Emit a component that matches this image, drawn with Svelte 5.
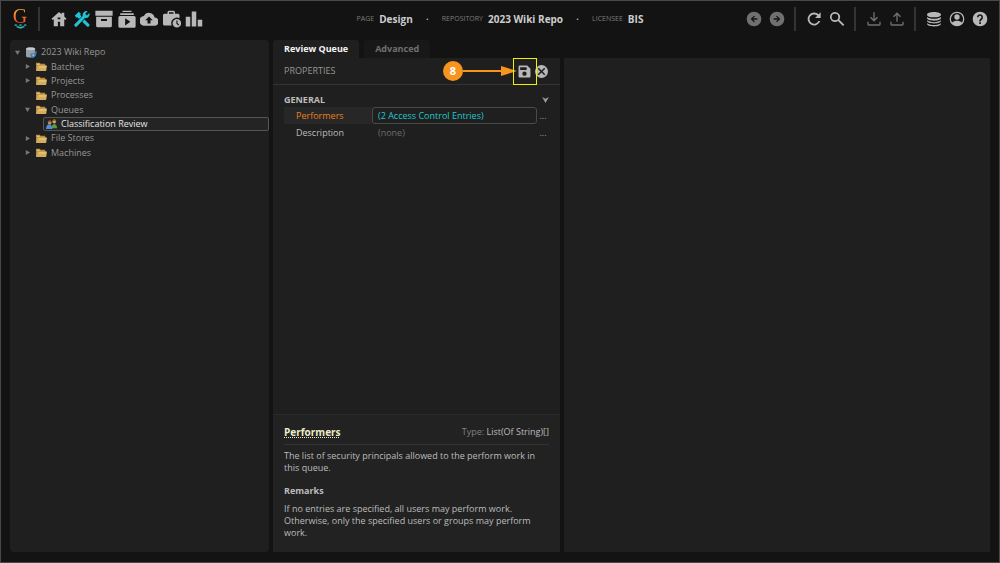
<script>
    const tools = [
        { name: 'home', label: 'Home' },
        { name: 'design', label: 'Design' },
        { name: 'batches', label: 'Batches' },
        { name: 'tasks', label: 'Tasks' },
        { name: 'imports', label: 'Imports' },
        { name: 'jobs', label: 'Jobs' },
        { name: 'stats', label: 'Stats' }
    ];

    const actions = [
        [{ name: 'back', label: 'Back', dim: true }, { name: 'forward', label: 'Forward', dim: true }],
        [{ name: 'refresh', label: 'Refresh' }, { name: 'search', label: 'Search' }],
        [{ name: 'download', label: 'Download', dim: true }, { name: 'upload', label: 'Upload', dim: true }],
        [{ name: 'database', label: 'Repositories' }, { name: 'user', label: 'Account' }, { name: 'help', label: 'Help' }]
    ];

    const crumbs = [
        { key: 'PAGE', value: 'Design' },
        { key: 'REPOSITORY', value: '2023 Wiki Repo' },
        { key: 'LICENSEE', value: 'BIS' }
    ];

    const nodes = [
        { label: '2023 Wiki Repo', level: 0, arrow: 'down', icon: 'repo' },
        { label: 'Batches', level: 1, arrow: 'right', icon: 'folder' },
        { label: 'Projects', level: 1, arrow: 'right', icon: 'folder' },
        { label: 'Processes', level: 1, arrow: '', icon: 'folder' },
        { label: 'Queues', level: 1, arrow: 'down', icon: 'folder' },
        { label: 'Classification Review', level: 2, arrow: '', icon: 'people' },
        { label: 'File Stores', level: 1, arrow: 'right', icon: 'folder' },
        { label: 'Machines', level: 1, arrow: 'right', icon: 'folder' }
    ];

    let page = 'design';
    let tab = 'Review Queue';
    let selected = 'Classification Review';

    // 24x24 icon shapes, filled with even-odd
    const paths = {
        home: 'M12 2.500 2 11.500l1.600 1.900L5 12.200V21.500h5.500v-6h3v6H19v-9.300l1.400 1.200 1.600-1.900-3-2.700V3.500h-3.500v2.200zM10.200 10h3.600v2.200h-3.600z',
        design: 'M21.300 18.700 15.300 12.700 12.400 15.600 18.400 21.600a2 2 0 0 0 2.900-2.900zM17 10.800a5 5 0 0 0 4.700-6.800l-3.200 3.200-2.200-2.200 3.200-3.200a5 5 0 0 0-6.500 6.100l-10.600 10.700a2.100 2.100 0 0 0 3 3L15.900 10.700zM9.700 10.300l1.800-1.800-1.900-1.900.8-1.500L7.800 2.300 2.300 7.500l3 3 .9-.9 1.800 2.500z',
        batches: 'M.5 1h23v6.500H.5zM1.500 9h21v12a2 2 0 0 1-2 2h-17a2 2 0 0 1-2-2zM8 12v2.500h8V12z',
        tasks: 'M6 1h12v1.800H6zM3 4.300h18v2.200H3zM2.500 8h19a2 2 0 0 1 2 2v11.500a2 2 0 0 1-2 2h-19a2 2 0 0 1-2-2V10a2 2 0 0 1 2-2zM9.500 11v9.500l7-4.700z',
        imports: 'M19.400 10A7.500 7.500 0 0 0 5.300 8 6.500 6.500 0 0 0 6 21h13.500a5.500 5.500 0 0 0-.1-11zM14 13.500V18h-4v-4.500H7l5-5 5 5z',
        jobs: 'M8 1h6a2 2 0 0 1 2 2v2h4a2 2 0 0 1 2 2v4a7.500 7.500 0 0 0-10.400 9.500H2a2 2 0 0 1-2-2V7a2 2 0 0 1 2-2h4V3a2 2 0 0 1 2-2zM8 3v2h6V3zM18.500 12a5.700 5.700 0 1 0 0 11.400 5.700 5.700 0 0 0 0-11.400zM17.800 14h1.500v3.300l2.200 2.200-1.100 1-2.600-2.600z',
        stats: 'M1 9h6v13H1zM9 2h6v20H9zM17 13h6v9h-6z',
        back: 'M12 1a11 11 0 1 0 0 22 11 11 0 0 0 0-22zM12 7l1.400 1.400-2.600 2.500H17v2.200h-6.200l2.600 2.500L12 17l-5-5z',
        forward: 'M12 1a11 11 0 1 0 0 22 11 11 0 0 0 0-22zM12 7l5 5-5 5-1.400-1.400 2.600-2.500H7v-2.200h6.200l-2.600-2.500z',
        refresh: 'M19 5A9.700 9.700 0 1 0 21.400 15h-2.800A7 7 0 1 1 17 7l-3.500 3.500H22V2z',
        search: 'M9 1.500a7.500 7.500 0 1 0 4.500 13.500L21 22.500l2-2-7.500-7.500A7.500 7.500 0 0 0 9 1.500zM9 4a5 5 0 1 1 0 10A5 5 0 0 1 9 4z',
        download: 'M11 2h2v10l3.500-3.500L18 10l-6 6-6-6 1.500-1.500L11 12zM2 16h2v4h16v-4h2v4a2 2 0 0 1-2 2H4a2 2 0 0 1-2-2z',
        upload: 'M12 2l6 6-1.500 1.500L13 6v10h-2V6L7.500 9.500 6 8zM2 16h2v4h16v-4h2v4a2 2 0 0 1-2 2H4a2 2 0 0 1-2-2z',
        database: 'M12 1.500c6 0 10.500 1.700 10.500 4s-4.500 4-10.500 4-10.500-1.700-10.500-4 4.500-4 10.500-4zM1.500 9c2 1.800 6 2.700 10.500 2.700s8.500-.9 10.500-2.700v1.500c0 2.200-4.500 4-10.500 4s-10.500-1.800-10.500-4zM1.500 14c2 1.800 6 2.700 10.500 2.700s8.500-.9 10.500-2.700v.8c0 2.200-4.500 4-10.500 4s-10.500-1.800-10.500-4zM1.500 18.300c2 1.800 6 2.700 10.500 2.700s8.500-.9 10.500-2.700v1c0 2.200-4.500 4-10.500 4s-10.500-1.800-10.500-4z',
        user: 'M12 1a11 11 0 1 0 0 22 11 11 0 0 0 0-22zM12 3a9 9 0 0 1 7.300 14.200c-1.500-1.900-5.100-2.600-7.300-2.600s-5.800.7-7.300 2.600A9 9 0 0 1 12 3zM12 5a4 4 0 1 0 0 8 4 4 0 0 0 0-8z',
        help: 'M12 1a11 11 0 1 0 0 22 11 11 0 0 0 0-22zM10.800 17h2.500v2.500h-2.500zM7.500 9.500a4.500 4.500 0 1 1 7.700 3.100c-1.300 1.200-1.900 1.600-1.900 3.200h-2.500c0-2.600 1.100-3.400 2.300-4.500A2.200 2.200 0 1 0 9.800 9.500z',
        save: 'M3 1h14l6 6v14a2 2 0 0 1-2 2H3a2 2 0 0 1-2-2V3a2 2 0 0 1 2-2zM4 4v5h12V4zM12 12a4 4 0 1 0 0 8 4 4 0 0 0 0-8z',
        close: 'M12 0a12 12 0 1 0 0 24 12 12 0 0 0 0-24zM7 5l5 5 5-5 2 2-5 5 5 5-2 2-5-5-5 5-2-2 5-5-5-5z'
    };
</script>

{#snippet icon(name)}
    <svg viewBox="0 0 24 24" aria-hidden="true"><path fill-rule="evenodd" d={paths[name]} /></svg>
{/snippet}

<div class="app">
    <header>
        <div class="left">
            <!-- G over a small teal wave -->
            <div class="logo">
                <span>G</span>
                <svg viewBox="0 0 14 5" aria-hidden="true">
                    <path d="M0 1l2-1 2 1-2 1zM5 1l2-1 2 1-2 1zM10 1l2-1 2 1-2 1zM2 3l2-1 3 1 3-1 2 1-3 1-2 1-2-1z" />
                </svg>
            </div>
            <i class="sep"></i>
            <nav>
                {#each tools as t}
                    <button class:active={page === t.name} aria-label={t.label} on:click={() => page = t.name}>{@render icon(t.name)}</button>
                {/each}
            </nav>
        </div>

        <div class="crumbs">
            {#each crumbs as c, i}
                {#if i > 0}<span class="dot">·</span>{/if}
                <span class="key">{c.key}</span>
                <b>{c.value}</b>
            {/each}
        </div>

        <div class="right">
            {#each actions as group, i}
                {#if i > 0}<i class="sep"></i>{/if}
                <div class="group">
                    {#each group as a}
                        <button class:dim={a.dim} aria-label={a.label}>{@render icon(a.name)}</button>
                    {/each}
                </div>
            {/each}
        </div>
    </header>

    <main>
        <aside>
            <ul>
                {#each nodes as n}
                    <li class="level{n.level}">
                        <button class="node" class:selected={selected === n.label} on:click={() => selected = n.label}>
                            {#if n.level < 2}
                                <svg class="arrow" viewBox="0 0 6 6" aria-hidden="true">
                                    {#if n.arrow === 'down'}<path d="M0 1h6L3 6z" />{/if}
                                    {#if n.arrow === 'right'}<path d="M1 0l5 3-5 3z" />{/if}
                                </svg>
                            {/if}
                            <svg class="pic" viewBox="0 0 12 12" aria-hidden="true">
                                {#if n.icon === 'folder'}
                                    <path fill="#b98a3c" d="M0 2h4l1 1h5v2h1v5H0z" />
                                    <path fill="#d3ad5c" d="M2 5h10l-1 6H0z" />
                                    <path fill="#ecd28e" d="M1 3h3v1H1zM3 6h8v1H3z" />
                                {:else if n.icon === 'repo'}
                                    <path fill="#98a0a6" d="M0 2c0-2 10-2 10 0v8c0 2-10 2-10 0z" />
                                    <path fill="#c5cacd" d="M0 2c0-2 10-2 10 0s-10 2-10 0z" />
                                    <path fill="#3d7dba" d="M5 7l3 0 4-3-1 5-3 3-3-2z" />
                                    <path fill="#8fc0e6" d="M7 8h2v2H7z" />
                                {:else}
                                    <circle cx="4" cy="4" r="2" fill="#c98b4f" />
                                    <path fill="#7c4a20" d="M2 4c0-4 4-4 4 0L5 3H3z" />
                                    <circle cx="9" cy="3" r="2" fill="#d9a066" />
                                    <path fill="#9a5c22" d="M7 3c0-4 4-4 4 0l-1-1H8z" />
                                    <path fill="#5b9a3a" d="M6 10c0-6 6-6 6 0z" />
                                    <path fill="#4a8fdb" d="M0 11c0-7 7-7 7 0z" />
                                {/if}
                            </svg>
                            <span>{n.label}</span>
                        </button>
                    </li>
                {/each}
            </ul>
        </aside>

        <section class="editor">
            <div class="tabs">
                {#each ['Review Queue', 'Advanced'] as t}
                    <button class:current={tab === t} on:click={() => tab = t}>{t}</button>
                {/each}
            </div>
            <div class="panel">
                <div class="bar">
                    <span>PROPERTIES</span>
                    <div class="barButtons">
                        <button aria-label="Save">{@render icon('save')}</button>
                        <button aria-label="Close">{@render icon('close')}</button>
                        <div class="callout">
                            <b>8</b>
                            <svg viewBox="0 0 54 12" aria-hidden="true"><path d="M0 5h38V1l16 5-16 5V7H0z" /></svg>
                            <i></i>
                        </div>
                    </div>
                </div>

                <div class="props">
                    <div class="category">
                        <b>GENERAL</b>
                        <svg viewBox="0 0 8 7" aria-hidden="true"><path d="M0 0l4 2 4-2-4 7z" /></svg>
                    </div>
                    <div class="row on">
                        <label for="performers">Performers</label>
                        <input id="performers" value="(2 Access Control Entries)" readonly>
                        <button aria-label="Edit performers">...</button>
                    </div>
                    <div class="row">
                        <label for="description">Description</label>
                        <input id="description" value="(none)">
                        <button aria-label="Edit description">...</button>
                    </div>
                </div>

                <article>
                    <div class="title">
                        <h3>Performers</h3>
                        <span>Type: <em>List(Of String)[]</em></span>
                    </div>
                    <p>The list of security principals allowed to the perform work in this queue.</p>
                    <h4>Remarks</h4>
                    <p>If no entries are specified, all users may perform work. Otherwise, only the specified users or groups may perform work.</p>
                </article>
            </div>
        </section>

        <section class="preview"></section>
    </main>
</div>

<style>
    :global(body) {
        background: #131313;
    }

    .app {
        box-sizing: border-box;
        display: flex;
        flex-direction: column;
        min-height: 100vh;
        border: 1px solid #484848;
        background: #131313;
        color: #bcbcbc;
        font: 9px/12px "Open Sans", "Noto Sans", sans-serif;
    }

    button, input {
        margin: 0;
        padding: 0;
        border: 0;
        background: none;
        color: inherit;
        font: inherit;
    }

    button {
        cursor: pointer;
    }

    svg {
        display: block;
        fill: currentColor;
    }

    header {
        display: grid;
        grid-template-columns: 1fr auto 1fr;
        align-items: center;
        height: 35px;
        padding: 0 10px 4px;
    }

    .left, .right, nav, .group {
        display: flex;
        align-items: center;
    }

    .right {
        justify-content: flex-end;
    }

    nav {
        justify-content: space-between;
        width: 153px;
        margin-left: 10px;
    }

    nav button, .group button {
        width: 18px;
        height: 18px;
        color: #b8b8b8;
    }

    .group button {
        padding: 1px;
    }

    nav button.active {
        color: #20c4d4;
    }

    .group {
        gap: 5px;
    }

    .group button.dim {
        color: #707070;
    }

    .sep {
        width: 2px;
        height: 24px;
        background: #343434;
    }

    .right .sep {
        margin: 0 9px 0 8px;
    }

    .logo {
        width: 18px;
        margin-right: 9px;
    }

    .logo span {
        display: block;
        background: linear-gradient(#ffb030, #f03c30);
        background-clip: text;
        color: transparent;
        font: 20px/15px "Liberation Serif", serif;
        text-align: center;
    }

    .logo svg {
        width: 13px;
        height: 5px;
        margin: 0 auto;
        fill: #1cc0b8;
    }

    .crumbs {
        display: flex;
        align-items: center;
        white-space: nowrap;
    }

    .crumbs .key {
        margin-right: 5px;
        color: #7c7c7c;
        font-size: 7px;
    }

    .crumbs b {
        color: #cdcdcd;
        font-size: 10px;
    }

    .crumbs .dot {
        width: 29px;
        text-align: center;
        font-weight: bold;
    }

    main {
        display: grid;
        grid-template-columns: 259fr 287fr 426fr;
        gap: 4px;
        flex: 1;
        padding: 0 9px 10px;
    }

    aside {
        border-radius: 4px;
        background: #1f1f1f;
    }

    ul {
        display: grid;
        grid-auto-rows: 1fr;
        height: 115px;
        margin: 0;
        padding: 5px 0 0;
        list-style: none;
    }

    li {
        display: flex;
    }

    .level0 {
        padding-left: 5px;
    }

    .level1 {
        padding-left: 15px;
    }

    .level2 {
        padding-left: 33px;
    }

    .node {
        box-sizing: border-box;
        display: flex;
        flex: 1;
        align-items: center;
        color: #969696;
    }

    .node.selected {
        padding-left: 2px;
        border: 1px solid #555;
        border-radius: 2px;
        background: #242424;
        color: #e4e4e4;
    }

    .arrow {
        width: 5px;
        height: 5px;
        margin-right: 6px;
        fill: #777;
    }

    .pic {
        width: 11px;
        height: 11px;
        margin-right: 4px;
    }

    .editor {
        display: flex;
        flex-direction: column;
    }

    .tabs {
        display: flex;
        gap: 5px;
    }

    .tabs button {
        height: 18px;
        padding: 0 11px;
        border-radius: 4px 4px 0 0;
        background: #181818;
        color: #707070;
        font-weight: bold;
    }

    .tabs button.current {
        background: #1f1f1f;
        color: #f4f4f4;
    }

    .panel {
        display: flex;
        flex: 1;
        flex-direction: column;
        background: #1f1f1f;
    }

    .bar {
        display: flex;
        align-items: center;
        justify-content: space-between;
        height: 26px;
        padding: 0 12px 0 11px;
        border-bottom: 1px solid #343434;
        color: #969696;
    }

    .barButtons {
        position: relative;
        display: flex;
        gap: 4px;
        color: #b8b8b8;
    }

    .barButtons button {
        width: 13px;
        height: 13px;
    }

    /* numbered marker, arrow and frame over the save button */
    .callout {
        position: absolute;
        top: -7px;
        right: 11px;
        display: flex;
        align-items: center;
        pointer-events: none;
    }

    .callout b {
        width: 20px;
        border-radius: 50%;
        background: #f7941d;
        color: #fff;
        font-size: 11px;
        line-height: 20px;
        text-align: center;
    }

    .callout svg {
        width: 54px;
        height: 12px;
        margin-right: -4px;
        fill: #f7941d;
    }

    .callout i {
        box-sizing: border-box;
        width: 24px;
        height: 27px;
        border: 1px solid #f0f000;
    }

    .props {
        flex: 1;
        padding: 7px 11px 0;
    }

    .category {
        display: flex;
        align-items: center;
        justify-content: space-between;
        height: 15px;
    }

    .category svg {
        width: 7px;
        height: 6px;
        fill: #999;
    }

    .row {
        display: grid;
        grid-template-columns: 88px 1fr 12px;
        height: 17px;
    }

    .row label {
        padding-left: 12px;
        line-height: 17px;
    }

    .row input {
        min-width: 0;
        padding: 0 5px;
        border: 1px solid transparent;
        color: #6c6c6c;
    }

    .row button {
        color: #999;
    }

    .row.on label {
        background: #272727;
        color: #e8801c;
    }

    .row.on input {
        border-color: #4a4a4a;
        border-radius: 3px;
        color: #20c8cc;
    }

    article {
        box-sizing: border-box;
        min-height: 138px;
        padding: 6px 11px 12px;
        border-top: 1px solid #2a2a2a;
        background: #222;
    }

    .title {
        display: flex;
        align-items: center;
        justify-content: space-between;
        height: 21px;
        margin-bottom: 5px;
        padding-bottom: 2px;
        border-bottom: 1px solid #333;
        color: #808080;
    }

    .title em {
        color: #bcbcbc;
        font-style: normal;
    }

    h3, h4, p {
        margin: 0;
    }

    h3 {
        color: #ececc8;
        font-size: 10px;
        text-decoration: underline dotted;
        text-underline-offset: 1px;
    }

    h4 {
        margin: 11px 0 6px;
        font-size: 9px;
    }

    .preview {
        margin-top: 18px;
        background: #1f1f1f;
    }
</style>
